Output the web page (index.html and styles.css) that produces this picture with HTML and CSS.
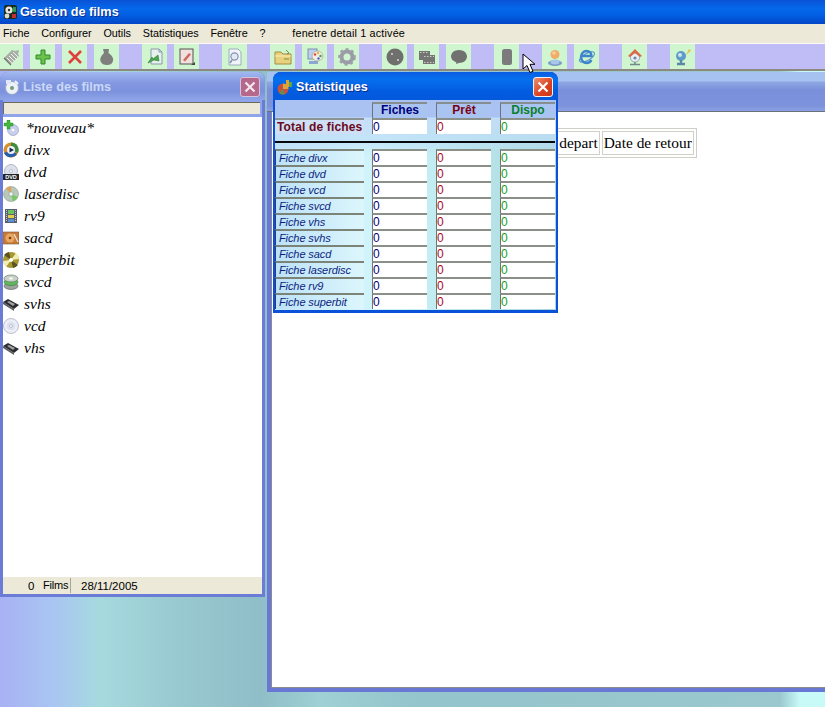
FILE: index.html
```html
<!DOCTYPE html>
<html lang="fr">
<head>
<meta charset="utf-8">
<title>Gestion de films</title>
<link rel="stylesheet" href="styles.css">
</head>
<body>
<div class="app">
  <header class="titlebar">
    <svg class="app-icon" viewBox="0 0 16 16"><rect x="2" y="1" width="13" height="14" rx="2" fill="#1c2a22"/><circle cx="7" cy="6" r="3.6" fill="#e8e8e0"/><circle cx="7" cy="6" r="1.2" fill="#333"/><circle cx="5" cy="12" r="2.4" fill="#dcdcd0"/><rect x="11" y="3" width="3" height="5" fill="#2c9a50"/><rect x="10" y="10" width="4" height="4" fill="#c23030"/></svg>
    <span>Gestion de films</span>
  </header>
  <nav class="menubar">
    <span>Fiche</span><span>Configurer</span><span>Outils</span><span>Statistiques</span><span>Fenêtre</span><span>?</span>
    <span class="menu-status">fenetre detail 1 activée</span>
  </nav>
  <div class="toolbar">
    <div class="tool first"><svg viewBox="0 0 18 18"><path d="M1 10 9 2l3 1 4-1-1 4 1 2-8 8z" fill="#a9aea6"/><path d="M4 10l6 6M6 8l6 6M8 6l6 6M10 4l5 5" stroke="#eef2ea" stroke-width="1"/><path d="M1 10l7 7" stroke="#70756e" stroke-width="1.2"/></svg></div>
    <div class="tool"><svg viewBox="0 0 18 18"><path d="M7 2h4v5h5v4h-5v5H7v-5H2V7h5z" fill="#6cc04c" stroke="#2e8a30"/></svg></div>
    <div class="tool"><svg viewBox="0 0 18 18"><path d="M3 3l12 12M15 3 3 15" stroke="#e0403c" stroke-width="2.6"/></svg></div>
    <div class="tool gap"><svg viewBox="0 0 18 18"><path d="M5 1h6l-.5 4c3 2 5.500 5 4.500 8-1 3-3 4-6 4s-5.500-1-6.500-4c-1-3 1.500-6 3.500-8z" fill="#7f7f7d"/></svg></div>
    <div class="tool"><svg viewBox="0 0 18 18"><path d="M5 1h8l3 3v12H5z" fill="#e6f0ee" stroke="#8c98a8"/><path d="M13 1v3h3" fill="none" stroke="#8c98a8"/><path d="M2 15l4-6 1 2 5-4 1 6-5-1z" fill="#4ca84c" stroke="#2c7a34" stroke-width=".6"/></svg></div>
    <div class="tool gap"><svg viewBox="0 0 18 18"><rect x="2" y="1" width="13" height="15" fill="#f0e0de" stroke="#555"/><path d="M5 12l6-7 2 1.500-6 7z" fill="#cf6a62"/><path d="M13 17l4-3v3z" fill="#444"/></svg></div>
    <div class="tool gap"><svg viewBox="0 0 18 18"><path d="M3 1h9l3 3v13H3z" fill="#f0f4fa" stroke="#a0acc0"/><circle cx="8.5" cy="8.5" r="3.6" fill="#dfeaf5" stroke="#8393ad" stroke-width="1.2"/><path d="M6 12l-2 3" stroke="#8393ad" stroke-width="1.6"/></svg></div>
    <div class="tool"><svg viewBox="0 0 18 18"><path d="M1 4h6l2 2h8v10H1z" fill="#e9d27e" stroke="#a48b45"/><path d="M1 8h16" stroke="#f8eeb8"/><path d="M10 11h5M12 2l3 3-2 1" stroke="#7e8a44" fill="none"/></svg></div>
    <div class="tool"><svg viewBox="0 0 18 18"><rect x="2" y="1" width="9" height="10" fill="#bcd0ee" stroke="#7c8fb0"/><rect x="3" y="13" width="9" height="3" fill="#8ea6d4"/><ellipse cx="11.5" cy="8" rx="5.500" ry="5" fill="#f2ece4" stroke="#9a948c" stroke-width=".6"/><circle cx="9" cy="6.5" r="1.200" fill="#d84a3c"/><circle cx="12" cy="5" r="1.200" fill="#e4b43c"/><circle cx="14.500" cy="8" r="1.200" fill="#4c9a50"/><circle cx="12.500" cy="10.5" r="1.200" fill="#4468c0"/></svg></div>
    <div class="tool gap"><svg viewBox="0 0 18 18"><circle cx="9" cy="9" r="5.500" fill="none" stroke="#9b9ca8" stroke-width="4"/><circle cx="9" cy="9" r="8" fill="none" stroke="#9b9ca8" stroke-width="1.600" stroke-dasharray="3 3"/></svg></div>
    <div class="tool"><svg viewBox="0 0 18 18"><circle cx="9" cy="9" r="8.5" fill="#6f6f6d"/><circle cx="6" cy="6" r="1.100" fill="#cfd3cf"/><circle cx="12" cy="12" r="1.100" fill="#cfd3cf"/></svg></div>
    <div class="tool"><svg viewBox="0 0 18 18"><path d="M1 3h11v4h5v9H5v-4H1z" fill="#757573"/><path d="M2 4.500h9M6 8.500h10M6 14.500h10" stroke="#c9d0c7" stroke-dasharray="1.5 1.5"/></svg></div>
    <div class="tool gap"><svg viewBox="0 0 18 18"><path d="M9 2c4.500 0 8 2.800 8 6.500S13.500 15 9 15l-3 1 .5-1.500C3 13 1 11 1 8.500 1 4.800 4.500 2 9 2z" fill="#717170"/></svg></div>
    <div class="tool gap"><svg viewBox="0 0 18 18"><rect x="4" y="1" width="10" height="16" rx="2.5" fill="#7b7b7d"/></svg></div>
    <div class="tool"><svg viewBox="0 0 18 18"><ellipse cx="9" cy="15" rx="7" ry="3" fill="#7a9bc8"/><ellipse cx="9" cy="14" rx="4.500" ry="2.500" fill="#a8c6e8"/><circle cx="9" cy="6.5" r="4.500" fill="#f0ac68"/><circle cx="8" cy="5" r="1.800" fill="#f8d0a0"/></svg></div>
    <div class="tool gap"><svg viewBox="0 0 18 18"><ellipse cx="9" cy="9" rx="8.500" ry="3.500" fill="none" stroke="#5c94cc" stroke-width="1.100" transform="rotate(-30 9 9)"/><path d="M3.500 8h10c0-3-2-5-5-5s-5.500 2.800-5.500 6 2.500 6 5.500 6c2.300 0 4-1 4.800-3" fill="none" stroke="#3c84cc" stroke-width="2.400"/></svg></div>
    <div class="tool gap"><svg viewBox="0 0 18 18"><circle cx="9" cy="9.5" r="4.600" fill="#e8eef2" stroke="#9aa6ae"/><path d="M2 8l7-7 7 7-2 1-5-4-5 4z" fill="#d86a48"/><circle cx="9" cy="10" r="1.600" fill="#6888a8"/><path d="M9 14v2M4 16.500h10" stroke="#758a88" stroke-width="1.500"/></svg></div>
    <div class="tool"><svg viewBox="0 0 18 18"><circle cx="7" cy="8" r="5" fill="#5e9cc8"/><circle cx="6" cy="7" r="2" fill="#cfe4f2"/><path d="M7 12v3M3 16h8" stroke="#5b88a8" stroke-width="2.400"/><path d="M12 7l3-6 2 1.500z" fill="#e6c04a"/></svg></div>
  </div>
  <main class="desktop">
    <section class="window back">
      <div class="back-title"></div>
      <div class="back-body">
        <table class="grid">
          <tr><td>Date de depart</td><td>Date de retour</td></tr>
        </table>
      </div>
    </section>

    <section class="window films">
      <div class="win-title inactive">
        <svg class="win-icon" viewBox="0 0 16 16"><circle cx="8" cy="9" r="6.5" fill="#eef2f8" stroke="#98a6c4"/><circle cx="8" cy="9" r="2" fill="#6f9d78"/><rect x="2" y="1" width="5" height="4" fill="#dfe6f6"/><path d="M11 2l3 3" stroke="#f0f4ff" stroke-width="2"/></svg>
        <span class="win-name">Liste des films</span>
        <button class="close dim" type="button" aria-label="Fermer"><svg viewBox="0 0 12 12"><path d="M1.500 1.500l9 9M10.500 1.500l-9 9" stroke="#f2e8ee" stroke-width="2.200"/></svg></button>
      </div>
      <div class="search"></div>
      <ul class="film-list">
        <li class="new"><svg viewBox="0 0 16 16"><circle cx="10" cy="10" r="5.500" fill="#c8d0ee" stroke="#8c96b8" stroke-width=".6"/><circle cx="10" cy="10" r="1.300" fill="#fff"/><path d="M4 0h3v3h3v3H7v3H4V6H1V3h3z" fill="#45b83c" stroke="#207a20" stroke-width=".4"/></svg><span>*nouveau*</span></li>
        <li><svg viewBox="0 0 16 16"><circle cx="8" cy="8" r="7.5" fill="#d8902c"/><path d="M8 .5A7.500 7.500 0 0 1 15 11L8 8z" fill="#3e8c40"/><path d="M1 11a7.500 7.500 0 0 0 13 1L8 8z" fill="#2a5ea8"/><circle cx="8" cy="8" r="4" fill="#eef2f8"/><path d="M6.500 5.500 11 8l-4.500 2.500z" fill="#1c2a52"/></svg><span>divx</span></li>
        <li><svg viewBox="0 0 16 16"><circle cx="8" cy="7" r="6.5" fill="#dce0ea" stroke="#8c92a2" stroke-width=".6"/><circle cx="8" cy="7" r="1.5" fill="#fff" stroke="#8c92a2" stroke-width=".5"/><rect x="0" y="10" width="16" height="6" fill="#22242c"/><text class="dvd-mark" x="8" y="15">DVD</text></svg><span>dvd</span></li>
        <li><svg viewBox="0 0 16 16"><circle cx="8" cy="8" r="7.5" fill="#b8c8b8" stroke="#8c9a90" stroke-width=".6"/><path d="M8 8 3 2.500A7.500 7.500 0 0 1 8 .5z" fill="#e0a058"/><path d="M8 8l7 3a7.500 7.500 0 0 1-5 4.300z" fill="#78c868"/><circle cx="8" cy="8" r="2.2" fill="#eef2ea" stroke="#788" stroke-width=".5"/></svg><span>laserdisc</span></li>
        <li><svg viewBox="0 0 16 16"><rect x="2" y="1" width="12" height="14" fill="#5a6070"/><rect x="5" y="2" width="6" height="4" fill="#6ac45c"/><rect x="5" y="7" width="6" height="3" fill="#e4d048"/><rect x="5" y="11" width="6" height="3" fill="#5a8fd0"/><path d="M3.500 2v12M12.500 2v12" stroke="#c8ccd4" stroke-dasharray="1 1"/></svg><span>rv9</span></li>
        <li><svg viewBox="0 0 16 16"><rect x="0" y="2" width="16" height="12" fill="#c87a38" stroke="#7a5a3c" stroke-width=".6"/><circle cx="7" cy="8" r="4.5" fill="#e8a860"/><circle cx="7" cy="8" r="1.3" fill="#7c3c1c"/><path d="M11 4l4 8" stroke="#e8dcc8" stroke-width="1.4"/></svg><span>sacd</span></li>
        <li><svg viewBox="0 0 16 16"><circle cx="8" cy="8" r="8" fill="#a89834"/><path d="M8 8 13 1a8 8 0 0 1 3 6zM8 8 3 15a8 8 0 0 1-3-6z" fill="#f2ecb0"/><path d="M8 8 1 3a8 8 0 0 1 5-3zM8 8l7 5a8 8 0 0 1-5 3z" fill="#5a5420"/><circle cx="8" cy="8" r="2" fill="#fff"/></svg><span>superbit</span></li>
        <li><svg viewBox="0 0 16 16"><ellipse cx="8" cy="12" rx="7" ry="3.5" fill="#9aa49a" stroke="#555" stroke-width=".6"/><ellipse cx="8" cy="8" rx="7" ry="3.5" fill="#5cbc5c" stroke="#3c6c3c" stroke-width=".6"/><ellipse cx="8" cy="4.5" rx="7" ry="3.5" fill="#c8d2c8" stroke="#5c6c5c" stroke-width=".6"/><ellipse cx="8" cy="4.5" rx="2" ry="1" fill="#fff"/></svg><span>svcd</span></li>
        <li><svg viewBox="0 0 16 16"><path d="M0 6l5-3 11 6-5 4z" fill="#2c2c30"/><path d="M4 6l2-1 6 3-2 2z" fill="#a0a0a4"/><path d="M0 6v2l11 7v-2z" fill="#5c5c60"/></svg><span>svhs</span></li>
        <li><svg viewBox="0 0 16 16"><circle cx="8" cy="8" r="7.5" fill="#eceef6" stroke="#a4a8ba" stroke-width=".7"/><circle cx="8" cy="8" r="4" fill="#dcdff0"/><circle cx="8" cy="8" r="1.4" fill="#fff" stroke="#9094a8" stroke-width=".5"/></svg><span>vcd</span></li>
        <li><svg viewBox="0 0 16 16"><path d="M0 6l5-3 11 6-5 4z" fill="#2c2c30"/><path d="M4 6l2-1 6 3-2 2z" fill="#a0a0a4"/><path d="M0 6v2l11 7v-2z" fill="#5c5c60"/></svg><span>vhs</span></li>
      </ul>
      <footer class="statusbar">
        <span class="count">0</span><span class="unit">Films</span><span class="date">28/11/2005</span>
      </footer>
    </section>

    <section class="window stats">
      <div class="win-title active">
        <svg class="win-icon" viewBox="0 0 16 16"><circle cx="6" cy="10" r="5.5" fill="#c8503c"/><path d="M6 10V4.500A5.500 5.500 0 0 1 11.500 10z" fill="#dca83c"/><path d="M6 10l-4 4a5.500 5.500 0 0 0 6 1z" fill="#6a8c50"/><rect x="9" y="1" width="3" height="7" fill="#e8a030"/><rect x="12" y="3" width="3" height="5" fill="#58a848"/></svg>
        <span class="win-name">Statistiques</span>
        <button class="close red" type="button" aria-label="Fermer"><svg viewBox="0 0 12 12"><path d="M1.500 1.500l9 9M10.500 1.500l-9 9" stroke="#fff" stroke-width="2.200"/></svg></button>
      </div>
      <div class="stats-body">
        <div class="stats-row head">
          <span></span><b class="col navy">Fiches</b><b class="col maroon">Prêt</b><b class="col green">Dispo</b>
        </div>
        <div class="stats-row total">
          <b class="total-label">Total de fiches</b><span class="field navy">0</span><span class="field red-text">0</span><span class="field green-text">0</span>
        </div>
        <hr class="rule">
        <div class="stats-row"><i class="label">Fiche divx</i><span class="field navy">0</span><span class="field red-text">0</span><span class="field green-text">0</span></div>
        <div class="stats-row"><i class="label">Fiche dvd</i><span class="field navy">0</span><span class="field red-text">0</span><span class="field green-text">0</span></div>
        <div class="stats-row"><i class="label">Fiche vcd</i><span class="field navy">0</span><span class="field red-text">0</span><span class="field green-text">0</span></div>
        <div class="stats-row"><i class="label">Fiche svcd</i><span class="field navy">0</span><span class="field red-text">0</span><span class="field green-text">0</span></div>
        <div class="stats-row"><i class="label">Fiche vhs</i><span class="field navy">0</span><span class="field red-text">0</span><span class="field green-text">0</span></div>
        <div class="stats-row"><i class="label">Fiche svhs</i><span class="field navy">0</span><span class="field red-text">0</span><span class="field green-text">0</span></div>
        <div class="stats-row"><i class="label">Fiche sacd</i><span class="field navy">0</span><span class="field red-text">0</span><span class="field green-text">0</span></div>
        <div class="stats-row"><i class="label">Fiche laserdisc</i><span class="field navy">0</span><span class="field red-text">0</span><span class="field green-text">0</span></div>
        <div class="stats-row"><i class="label">Fiche rv9</i><span class="field navy">0</span><span class="field red-text">0</span><span class="field green-text">0</span></div>
        <div class="stats-row"><i class="label">Fiche superbit</i><span class="field navy">0</span><span class="field red-text">0</span><span class="field green-text">0</span></div>
      </div>
    </section>

    <svg class="cursor" viewBox="0 0 14 21"><path d="M1 1v15l4-3.500 3 7 3-1.200-3-7h5z" fill="#fff" stroke="#000" stroke-width="1"/></svg>
  </main>
</div>
</body>
</html>
```
FILE: styles.css
```css
* { box-sizing: border-box; }
html, body { margin: 0; height: 100%; }
body { overflow: hidden; font-family: "Liberation Sans", Arial, sans-serif; color: #000; }
.app { width: 825px; height: 707px; display: flex; flex-direction: column; overflow: hidden; }

.titlebar {
  height: 24px; flex: none; display: flex; align-items: center; gap: 2px; padding-left: 2px;
  background: linear-gradient(#0a52d6 0, #0568ea 35%, #025ee2 65%, #0346c6 100%);
  color: #fff; font-weight: bold; font-size: 12.7px;
  text-shadow: 1px 1px 0 #0a2c8c;
}
.app-icon { width: 16px; height: 16px; flex: none; }

.menubar {
  height: 20px; flex: none; display: flex; align-items: center; gap: 11.8px; padding: 0 0 1px 3px;
  background: #ece9d8; font-size: 10.8px; border-bottom: 1px solid #fbfaf6;
}
.menu-status { margin-left: 15px; letter-spacing: .17px; }

.toolbar {
  height: 27px; flex: none; display: flex; gap: 7px;
  background: #c0bcf6; border-bottom: 2px solid #8c8a80;
}
.tool {
  width: 25px; height: 25px; flex: none; background: #cff6cf;
  display: flex; align-items: center; justify-content: center;
}
.tool.first { width: 23px; }
.tool.gap { margin-right: 16px; }
.tool svg { width: 18px; height: 18px; }

.desktop {
  position: relative; flex: 1; min-height: 0;
  background: linear-gradient(90deg, #a8b2f4 0, #a9c6f2 55px, #a6dadf 100px, #98c8d0 180px, #90bec8 260px, #9ed0d4 320px, #94c4cc 420px, #9ac8ce 780px, #c8fbf8 800px, #c8fbf8 825px);
}
.window { position: absolute; }

.back { left: 267px; top: 1px; width: 620px; height: 620px; border: 4px solid #6878d4; border-top: 0; border-right: 0; background: #fff; display: flex; flex-direction: column; }
.back-title {
  height: 40px; flex: none; margin-left: -4px;
  background: linear-gradient(#a6c2f0 0, #a6c2f0 9px, #8fa8e4 10px, #7a90da 18px, #7c92dc 34px, #8aa2e4 39px);
  border-bottom: 1px solid #6b6f78;
}
.back-body { flex: 1; padding: 16px 0 0 231px; border-left: 1px solid #8c8c8c; border-bottom: 1px solid #8c8c8c; }
.grid { border: 1px solid #cfcfc8; border-spacing: 2px; font-family: "Liberation Serif", "Times New Roman", serif; font-size: 15.4px; }
.grid td { border: 1px solid #d0d0c8; padding: 2px 1px; white-space: nowrap; }

.win-title { height: 28px; flex: none; display: flex; align-items: center; padding-top: 2px; border-radius: 8px 8px 0 0; font-weight: bold; font-size: 12.7px; }
.win-name { flex: 1; margin-left: 3px; }
.win-icon { width: 16px; height: 16px; flex: none; margin-left: 4px; }
.win-title.inactive { background: linear-gradient(#a2b8f0 0, #8297e0 40%, #7d92dc 70%, #8ea4e8 100%); color: #c8d8f6; }
.win-title.active { background: linear-gradient(#0a5ce2 0, #0670ee 25%, #035ce0 70%, #0458dc 100%); color: #fff; text-shadow: 1px 1px 0 #0a2c8c; }
.close { width: 20px; height: 20px; padding: 3px; border-radius: 3px; flex: none; display: block; }
.close svg { display: block; width: 12px; height: 12px; }
.close.dim { background: #b5688c; border: 1px solid #d8c4d8; margin-right: 5px; }
.close.red { background: linear-gradient(135deg, #f09070, #d84020 60%, #c83818); border: 1px solid #f2f2f6; margin-right: 5px; }

.films { left: 0; top: 1px; width: 265px; height: 525px; background: #8fa4ea; border: 3px solid #6a7cd6; border-top: 0; border-radius: 8px 8px 0 0; display: flex; flex-direction: column; }
.films .win-title { margin: 0 -3px; }
.search { height: 12px; flex: none; margin: 2px 2px 3px 0; background: #ece9d8; border-top: 1px solid #6a6a58; border-left: 1px solid #6a6a58; }
.film-list { flex: 1; list-style: none; margin: 0; padding: 0; background: #fff; font-family: "Liberation Serif", "Times New Roman", serif; font-style: italic; font-size: 15.5px; }
.film-list li { height: 22px; display: flex; align-items: center; gap: 5px; }
.film-list li.new span { margin-left: 2px; }
.film-list svg { width: 16px; height: 16px; flex: none; }
.dvd-mark { font: bold 5.5px "Liberation Sans", Arial, sans-serif; fill: #fff; text-anchor: middle; }
.statusbar { height: 17px; flex: none; display: flex; align-items: center; background: #ece9d8; font-size: 11.5px; }
.count { margin-left: 25px; width: 15px; }
.unit { width: 28px; height: 15px; line-height: 15px; font-size: 11px; letter-spacing: -.2px; border-right: 1px solid #a8a594; }
.date { margin-left: 10px; }

.stats { left: 273px; top: 1px; width: 285px; height: 241px; background: #0a50d8; border: 2px solid #0a50d8; border-top: 0; border-bottom-width: 3px; border-radius: 8px 8px 0 0; display: flex; flex-direction: column; }
.stats .win-title { margin: 0 -2px; }
.stats-body {
  flex: 1; padding: 2px 1px 0 0;
  background:
    linear-gradient(#aac2f2 0, #aac2f2 17px, rgba(196,220,248,.9) 18px, rgba(190,222,246,.7) 40px, rgba(190,230,246,0) 56px),
    linear-gradient(90deg, #c4e6fa 0, #d0f4fc 90px, #c4eef4 150px, #b4e2e6 220px, #aad6de 285px);
}
.stats-row { display: grid; grid-template-columns: 88px 55px 55px 55px; column-gap: 9px; height: 16px; }
.stats-row.total { margin-bottom: 7px; }
.col { background: #a9c4f0; border-top: 2px solid #868e92; border-left: 1px solid #6c7480; font-size: 12px; line-height: 13px; text-align: center; }
.field { background: #fff; border-top: 2px solid #8a9088; border-left: 1px solid #707478; font-size: 12px; line-height: 14px; margin-bottom: 1px; }
.total-label { background: #cfe0f6; border-top: 2px solid #8a9492; margin-right: -1px; font-size: 12px; line-height: 14px; letter-spacing: .15px; color: #6a0a1c; padding-left: 2px; margin-bottom: 1px; white-space: nowrap; }
.label { background: linear-gradient(90deg, #bce2f8, #dcf6fc); border-top: 2px solid #7c8478; border-left: 1px solid #2a3c70; margin-right: -1px; font-family: "Liberation Sans", Arial, sans-serif; font-size: 11px; line-height: 14px; color: #0c1e80; padding-left: 3px; letter-spacing: -.1px; margin-bottom: 1px; white-space: nowrap; }
.navy { color: #00007c; }
.maroon { color: #7c0014; }
.green { color: #08802c; }
.red-text { color: #a80820; }
.green-text { color: #14a01c; }
.rule { height: 2px; border: 0; margin: 0 0 6px; background: #06080c; }

.cursor { position: absolute; left: 522px; top: -18px; width: 14px; height: 21px; }
```
